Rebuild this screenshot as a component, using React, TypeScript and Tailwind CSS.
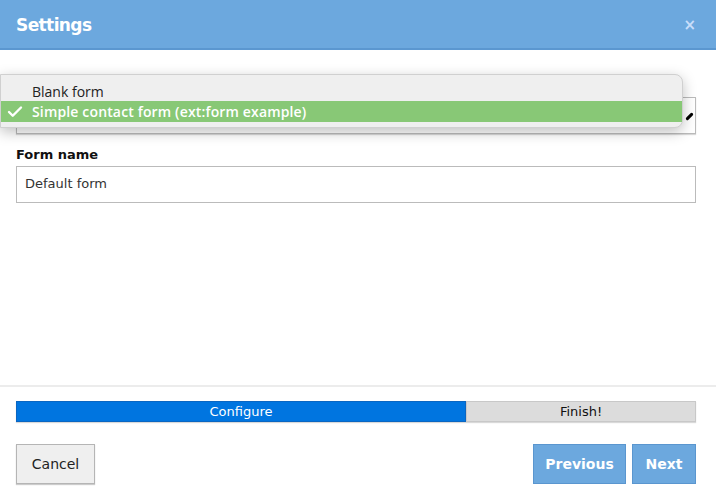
import { Check } from 'lucide-react';

export default function App() {
  return (
    <div className="w-[716px] h-[496px] bg-white flex flex-col overflow-hidden font-['DejaVu_Sans',Verdana,sans-serif] text-[13px] text-[#222]">
      <header className="h-[50px] shrink-0 bg-[#6ca8de] border-b-2 border-[#5b97d0] pl-4 pr-5 pt-[3px] flex items-center justify-between">
        <h1 className="text-[17px] font-bold text-white tracking-[-0.6px]">Settings</h1>
        <span className="text-[#c9defa] text-[15px] font-bold">×</span>
      </header>

      <div className="relative flex-1 pl-4 pr-5 pt-[47px]">
        <div className="h-[37px] border border-[#bbb] bg-white shadow-[0_1px_1px_rgba(0,0,0,0.15)] flex items-center justify-end pr-[4px]">
          <span className="w-[3px] h-[9px] bg-black rotate-45 rounded-sm translate-y-[1px]" />
        </div>

        <div className="absolute left-0 top-[24px] w-[683px] h-[54px] bg-[#efefef] border border-[#d0d0d0] rounded-r-[8px] shadow-[0_4px_14px_rgba(0,0,0,0.25)] flex flex-col pt-[5px] font-['Open_Sans',sans-serif] text-[14px]">
          <div className="h-[21px] pl-[31px] flex items-center text-[#222] pt-[2px]">Blank form</div>
          <div className="h-[21px] bg-[#88c876] flex items-center text-white font-semibold relative tracking-[0.15px]">
            <Check className="w-[18px] h-[18px] absolute left-[5px]" strokeWidth={3.2} />
            <span className="pl-[31px]">Simple contact form (ext:form example)</span>
          </div>
        </div>

        <label className="block mt-[11px] mb-[1px] font-bold text-[13px] text-[#111]">Form name</label>
        <div className="h-[37px] border border-[#bbb] flex items-center px-[8px] text-[13px] text-[#333]">
          Default form
        </div>
      </div>

      <div className="h-[2px] bg-[#ececec]" />

      <div className="pl-4 pr-5 pt-[14px]">
        <div className="h-[21px] flex text-[13px] shadow-[0_1px_1px_rgba(0,0,0,0.15)]">
          <div className="w-[450px] bg-[#0075e0] text-white flex items-center justify-center border border-[#0a66c2]">Configure</div>
          <div className="flex-1 bg-[#dcdcdc] text-[#111] flex items-center justify-center border border-[#c8c8c8]">Finish!</div>
        </div>
      </div>

      <div className="pl-4 pr-5 pt-[22px] pb-[12px] flex items-center justify-between">
        <button className="w-[79px] h-[40px] bg-[#efefef] border border-[#b5b5b5] shadow-[0_1px_1px_rgba(0,0,0,0.2)] text-[14px] text-[#222]">Cancel</button>
        <div className="flex gap-[6px]">
          <button className="w-[93px] h-[40px] bg-[#6ca8de] border border-[#5a96cf] text-white font-bold text-[14px]">Previous</button>
          <button className="w-[64px] h-[40px] bg-[#6ca8de] border border-[#5a96cf] text-white font-bold text-[14px]">Next</button>
        </div>
      </div>
    </div>
  );
}
